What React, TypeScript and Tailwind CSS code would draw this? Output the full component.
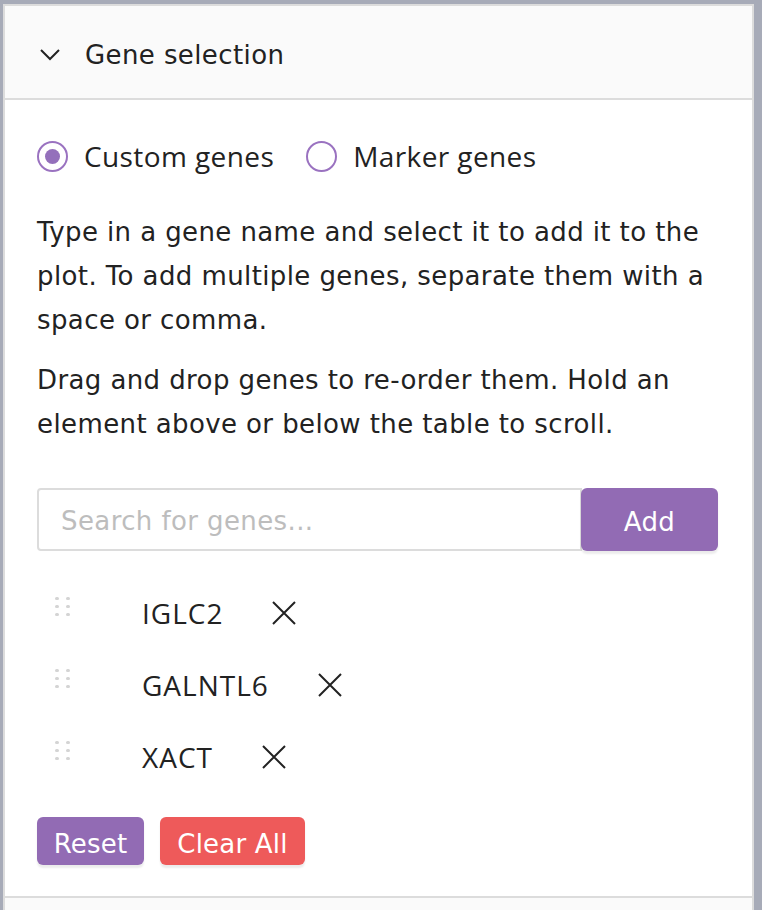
import React from "react";

const Handle = () => (
  <div className="grid grid-cols-2 gap-x-[7px] gap-y-[5px] w-[15px] mt-[-14px]">
    {Array.from({ length: 6 }).map((_, i) => (
      <span key={i} className="w-[4px] h-[3px] rounded-full bg-[#d4d4d4]" />
    ))}
  </div>
);

const XIcon = () => (
  <svg width="26" height="26" viewBox="0 0 26 26" fill="none" stroke="#222" strokeWidth="2">
    <path d="M2 2 L24 24 M24 2 L2 24" />
  </svg>
);

const genes = ["IGLC2", "GALNTL6", "XACT"];

export default function App() {
  return (
    <div className="h-[910px] overflow-hidden bg-[#a7abb8] pt-[4px] pl-[3px] pr-[8px] font-['Open_Sans',sans-serif] text-[#222]">
      <div className="border-2 border-[#dcdcdc] bg-white">
        <div className="h-[94px] bg-[#fafafa] border-b-2 border-[#dcdcdc] flex items-center pl-[34px] pt-[5px]">
          <svg width="22" height="14" viewBox="0 0 22 14" fill="none" stroke="#222" strokeWidth="2">
            <path d="M2 2 L11 11 L20 2" />
          </svg>
          <span className="ml-[24px] text-[26px] leading-none font-['DejaVu_Sans',sans-serif] tracking-[0.4px]">Gene selection</span>
        </div>
        <div className="h-[798px] border-b-2 border-[#dcdcdc] px-[32px] pt-[34px]">
          <div className="flex items-center h-[44px]">
            <label className="flex items-center">
              <span className="w-[31px] h-[31px] rounded-full border-2 border-[#9a72c0] flex items-center justify-center">
                <span className="w-[15px] h-[15px] rounded-full bg-[#9470bb]" />
              </span>
              <span className="ml-[16px] text-[28px] leading-none tracking-[0.4px]">Custom genes</span>
            </label>
            <label className="flex items-center ml-[32px]">
              <span className="w-[31px] h-[31px] rounded-full border-2 border-[#9a72c0]" />
              <span className="ml-[16px] text-[28px] leading-none tracking-[0.4px]">Marker genes</span>
            </label>
          </div>
          <p className="mt-[32px] text-[26px] leading-[44px] font-['DejaVu_Sans',sans-serif] tracking-[0.4px]">
            Type in a gene name and select it to add it to the
            <br />
            plot. To add multiple genes, separate them with a
            <br />
            space or comma.
          </p>
          <p className="mt-[16px] text-[26px] leading-[44px] font-['DejaVu_Sans',sans-serif] tracking-[0.4px]">
            Drag and drop genes to re-order them. Hold an
            <br />
            element above or below the table to scroll.
          </p>
          <div className="mt-[42px] flex h-[63px]">
            <input
              placeholder="Search for genes..."
              className="w-[545px] h-[63px] border-2 border-[#dcdcdc] rounded-l-[4px] px-[22px] pt-[3px] text-[26px] font-['DejaVu_Sans',sans-serif] tracking-[0.4px] placeholder:text-[#bdbdbd] outline-none"
            />
            <button className="w-[137px] h-[63px] -ml-[1px] pt-[5px] bg-[#926bb4] rounded-[6px] text-white text-[26px] font-['DejaVu_Sans',sans-serif] tracking-[0.4px] shadow-[0_3px_2px_rgba(0,0,0,0.08)]">
              Add
            </button>
          </div>
          <div className="mt-[26px] flex flex-col">
            {genes.map((g) => (
              <div key={g} className="h-[72px] flex items-center">
                <div className="w-[105px] pl-[18px]">
                  <Handle />
                </div>
                <span className="text-[28px] leading-none tracking-[1px]">{g}</span>
                <span className="ml-[48px] flex items-center">
                  <XIcon />
                </span>
              </div>
            ))}
          </div>
          <div className="mt-[24px] flex gap-[16px]">
            <button className="h-[48px] w-[107px] pt-[6px] bg-[#926bb4] rounded-[6px] text-white text-[26px] font-['DejaVu_Sans',sans-serif] tracking-[0.2px] shadow-[0_3px_2px_rgba(0,0,0,0.08)]">
              Reset
            </button>
            <button className="h-[48px] w-[145px] pt-[6px] bg-[#ee5a5a] rounded-[6px] text-white text-[26px] font-['DejaVu_Sans',sans-serif] tracking-[0.2px] shadow-[0_3px_2px_rgba(0,0,0,0.08)]">
              Clear All
            </button>
          </div>
        </div>
        <div className="h-[20px] bg-[#fafafa]" />
      </div>
    </div>
  );
}
